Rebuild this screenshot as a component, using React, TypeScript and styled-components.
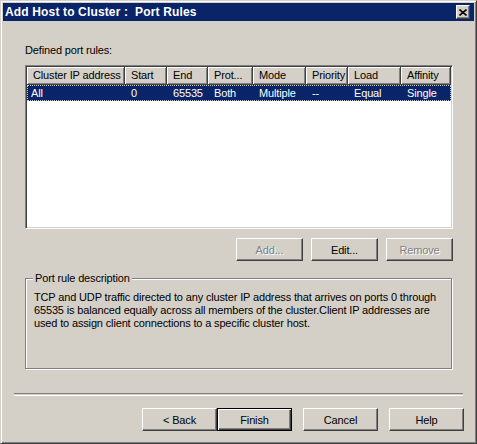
import React from "react";
import styled, { createGlobalStyle, css } from "styled-components";

const FACE = "#d4d0c8";
const SHADOW = "#808080";
const DARK = "#404040";
const NAVY = "#0a246a";

const GlobalStyle = createGlobalStyle`
  html, body {
    margin: 0;
    padding: 0;
    background: ${FACE};
  }
  body {
    font-family: "Liberation Sans", Arial, sans-serif;
    font-size: 11px;
    letter-spacing: -0.15px;
    color: #000;
  }
`;

const Window = styled.div`
  width: 477px;
  height: 444px;
  box-sizing: border-box;
  background: ${FACE};
  border: 1px solid;
  border-color: ${FACE} ${DARK} ${DARK} ${FACE};
  box-shadow: inset 1px 1px #fff, inset -1px -1px ${SHADOW};
  padding: 2px;
  display: flex;
  flex-direction: column;
`;

const TitleBar = styled.div`
  height: 18px;
  background: ${NAVY};
  display: flex;
  align-items: center;
  justify-content: space-between;
  padding-left: 2px;
`;

const TitleText = styled.span`
  color: #fff;
  font-weight: bold;
  font-size: 12px;
  letter-spacing: 0.15px;
  line-height: 18px;
`;

const CloseButton = styled.div`
  width: 14px;
  height: 14px;
  box-sizing: border-box;
  margin-right: 4px;
  background: ${FACE};
  border: 1px solid;
  border-color: #fff ${DARK} ${DARK} #fff;
  box-shadow: inset -1px -1px ${SHADOW};
  display: flex;
  align-items: center;
  justify-content: center;
`;

const Content = styled.div`
  padding: 23px 21px 0 22px;
`;

const Label = styled.div`
  line-height: 13px;
`;

const ListBox = styled.div`
  margin-top: 8px;
  width: 428px;
  height: 164px;
  box-sizing: border-box;
  background: #fff;
  border: 1px solid;
  border-color: ${SHADOW} #fff #fff ${SHADOW};
  box-shadow: inset 1px 1px ${DARK}, inset -1px -1px ${FACE};
  padding: 1px;
`;

const HeaderRow = styled.div`
  display: flex;
  height: 18px;
`;

const HeaderCell = styled.div<{ $w: number }>`
  width: ${(p) => p.$w}px;
  box-sizing: border-box;
  background: ${FACE};
  border-right: 1px solid ${DARK};
  border-bottom: 1px solid ${DARK};
  box-shadow: inset 1px 1px #fff, inset -1px -1px ${SHADOW};
  padding-left: 6px;
  line-height: 17px;
  white-space: nowrap;
  overflow: hidden;
`;

const Row = styled.div<{ $selected?: boolean }>`
  display: flex;
  height: 16px;
  ${(p) =>
    p.$selected &&
    css`
      background: ${NAVY};
      color: #fff;
      outline: 1px dotted #c8c8c8;
      outline-offset: -1px;
    `}
`;

const Cell = styled.div<{ $w: number; $first?: boolean }>`
  width: ${(p) => p.$w}px;
  box-sizing: border-box;
  padding-left: ${(p) => (p.$first ? 4 : 6)}px;
  line-height: 16px;
  white-space: nowrap;
  overflow: hidden;
`;

const ButtonRow = styled.div`
  margin-top: 9px;
  display: flex;
  justify-content: flex-end;
  gap: 8px;
`;

const Button = styled.button<{ $w?: number; $default?: boolean }>`
  width: ${(p) => p.$w ?? 75}px;
  height: 23px;
  box-sizing: border-box;
  padding: 0;
  margin: 0;
  background: ${FACE};
  font-family: "Liberation Sans", Arial, sans-serif;
  font-size: 11px;
  letter-spacing: -0.15px;
  color: #000;
  border: 1px solid;
  border-color: #fff ${DARK} ${DARK} #fff;
  box-shadow: inset -1px -1px ${SHADOW};
  cursor: default;

  ${(p) =>
    p.$default &&
    css`
      border-color: #000;
      box-shadow: inset 1px 1px #fff, inset -1px -1px ${DARK},
        inset -2px -2px ${SHADOW};
    `}

  &:disabled {
    color: ${SHADOW};
    text-shadow: 1px 1px #fff;
  }
`;

const GroupBox = styled.div`
  position: relative;
  margin-top: 17px;
  width: 427px;
  height: 91px;
  box-sizing: border-box;
  border: 1px solid ${SHADOW};
  box-shadow: inset 1px 1px #fff, 1px 1px #fff;
`;

const GroupCaption = styled.span`
  position: absolute;
  top: -7px;
  left: 7px;
  padding: 0 2px 0 2px;
  background: ${FACE};
  line-height: 13px;
`;

const GroupText = styled.div`
  padding: 12px 0 0 8px;
  line-height: 13px;
  white-space: nowrap;
`;

const Separator = styled.div`
  margin: 24px 11px 0 11px;
  height: 1px;
  border-top: 1px solid ${SHADOW};
  border-bottom: 1px solid #fff;
`;

const Footer = styled.div`
  margin-top: 12px;
  padding-right: 10px;
  display: flex;
  justify-content: flex-end;
  gap: 11px;
`;

const Pair = styled.div`
  display: flex;
`;

const columns = [
  { title: "Cluster IP address", w: 98, value: "All" },
  { title: "Start", w: 42, value: "0" },
  { title: "End", w: 41, value: "65535" },
  { title: "Prot...", w: 45, value: "Both" },
  { title: "Mode", w: 53, value: "Multiple" },
  { title: "Priority", w: 42, value: "--" },
  { title: "Load", w: 53, value: "Equal" },
  { title: "Affinity", w: 50, value: "Single" },
];

export default function App() {
  return (
    <>
      <GlobalStyle />
      <Window>
        <TitleBar>
          <TitleText>Add Host to Cluster :&nbsp; Port Rules</TitleText>
          <CloseButton>
            <svg width="8" height="7" viewBox="0 0 8 7">
              <path d="M0.5 0.5 L7.5 6.5 M7.5 0.5 L0.5 6.5" stroke="#000" strokeWidth="1.6" />
            </svg>
          </CloseButton>
        </TitleBar>
        <Content>
          <Label>Defined port rules:</Label>
          <ListBox>
            <HeaderRow>
              {columns.map((c) => (
                <HeaderCell key={c.title} $w={c.w}>
                  {c.title}
                </HeaderCell>
              ))}
            </HeaderRow>
            <Row $selected>
              {columns.map((c, i) => (
                <Cell key={c.title} $w={c.w} $first={i === 0}>
                  {c.value}
                </Cell>
              ))}
            </Row>
          </ListBox>
          <ButtonRow>
            <Button $w={67} disabled>
              Add...
            </Button>
            <Button $w={67}>Edit...</Button>
            <Button $w={67} disabled>
              Remove
            </Button>
          </ButtonRow>
          <GroupBox>
            <GroupCaption>Port rule description</GroupCaption>
            <GroupText>
              TCP and UDP traffic directed to any cluster IP address that arrives on ports 0 through
              <br />
              65535 is balanced equally across all members of the cluster.Client IP addresses are
              <br />
              used to assign client connections to a specific cluster host.
            </GroupText>
          </GroupBox>
        </Content>
        <Separator />
        <Footer>
          <Pair>
            <Button>&lt; Back</Button>
            <Button $default>Finish</Button>
          </Pair>
          <Button>Cancel</Button>
          <Button>Help</Button>
        </Footer>
      </Window>
    </>
  );
}
